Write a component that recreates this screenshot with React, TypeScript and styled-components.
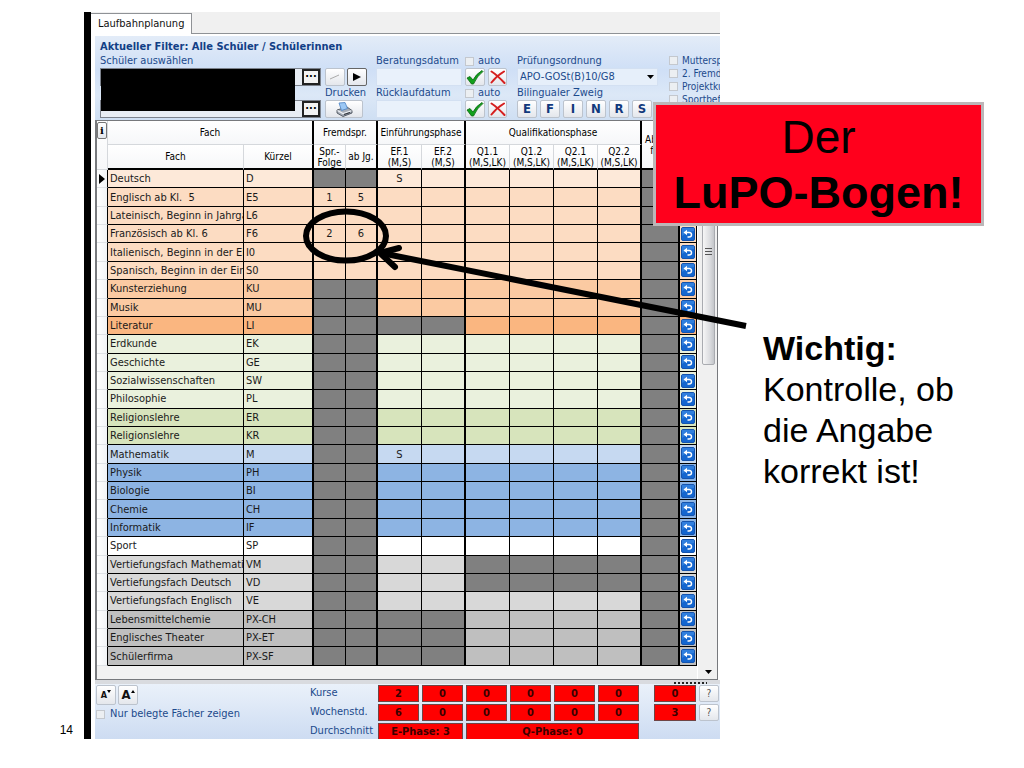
import React from "react";
import styled, { createGlobalStyle, css } from "styled-components";

const GlobalStyle = createGlobalStyle`
  * { box-sizing: border-box; }
  body {
    margin: 0;
    background: #fff;
    color: #000;
    font-family: "Liberation Sans", Arial, sans-serif;
  }
  button, input, select {
    font: inherit;
    margin: 0;
    padding: 0;
  }
`;

const UI_FONT = `"DejaVu Sans Condensed", "DejaVu Sans", Tahoma, sans-serif`;
const LABEL_BLUE = "#1c4a8c";

/* ---------- slide ---------- */

const Slide = styled.main`
  min-height: 100vh;
  display: grid;
  grid-template-columns: 84px minmax(0, 636px) minmax(0, 1fr);
  align-items: start;
  align-content: start;
  padding-top: 12px;
  overflow: hidden;
`;

const PageNumber = styled.div`
  align-self: end;
  justify-self: end;
  padding-right: 11px;
  font-size: 12px;
  line-height: 18px;
`;

const Shot = styled.section`
  position: relative;
  border-left: 7px solid #000;
  font-family: ${UI_FONT};
  font-size: 11px;
  line-height: 14px;
`;

const Note = styled.aside`
  padding: 316px 0 0 43px;
  font-size: 34px;
  line-height: 41px;
  p { margin: 0; max-width: 210px; }
`;

const Banner = styled.h1`
  position: absolute;
  left: 562px;
  top: 90px;
  width: 331px;
  height: 124px;
  margin: 0;
  padding: 5px 0;
  border: 3px solid #bcb6b8;
  background: #ff001c;
  color: #000;
  text-align: center;
  font: 400 46px/55px "Liberation Sans", Arial, sans-serif;
  white-space: nowrap;
  strong { display: block; font-size: 45px; }
`;

const Marks = styled.svg`
  position: absolute;
  left: 0;
  top: 0;
  overflow: visible;
  pointer-events: none;
`;

/* ---------- tab strip ---------- */

const TabStrip = styled.nav`
  display: flex;
  align-items: flex-end;
  height: 22px;
  background: #f0f0f0;
  border-bottom: 1px solid #8f9296;
`;

const Tab = styled.button`
  height: 21px;
  padding: 0 7px;
  margin-bottom: -1px;
  border: 1px solid #8f9296;
  border-width: 1px 1px 0 0;
  background: #fff;
  color: #111;
`;

const Body = styled.div`
  padding: 2px 0 0 4px;
  background: #fff;
`;

/* ---------- toolbar ---------- */

const Toolbar = styled.header`
  height: 84px;
  padding: 3px 0 0 5px;
  overflow: hidden;
  background: linear-gradient(#e3ecf8, #cfdff6 40%, #dce8f7 70%, #cfdff3);
  color: ${LABEL_BLUE};
`;

const FilterTitle = styled.h2`
  margin: 0;
  font-size: 11px;
  line-height: 15px;
  color: #123f86;
`;

const Controls = styled.div`
  display: flex;
  white-space: nowrap;
`;

const Group = styled.div<{ $w: number; $gap: number }>`
  flex: 0 0 ${(p) => p.$w}px;
  margin-right: ${(p) => p.$gap}px;
  display: grid;
  grid-template-rows: 14px 18px 14px 18px;
  position: relative;
`;

const Row = styled.div<{ $gap?: number }>`
  display: flex;
  align-items: center;
  gap: ${(p) => p.$gap ?? 0}px;
`;

const Caption = styled.label`
  display: flex;
  align-items: center;
  gap: 4px;
  font-size: 11px;
  line-height: 14px;
`;

const PickerRow = styled.div`
  display: flex;
  border: 1px solid #7c828c;
  background: #e8edf4;
`;

const PickerInput = styled.input`
  flex: 1;
  min-width: 0;
  border: 0;
  background: transparent;
`;

const DotsButton = styled.button`
  width: 18px;
  border: 2px solid #222;
  background: #f3f3f3;
  color: #000;
  font-weight: 700;
  line-height: 8px;
`;

const Redaction = styled.div`
  position: absolute;
  left: 1px;
  top: 15px;
  width: 194px;
  height: 42px;
  background: #000;
`;

const raised = css`
  border: 1px solid #bcc3cd;
  border-radius: 2px;
  background: linear-gradient(#ffffff, #e4e7ec);
  display: flex;
  align-items: center;
  justify-content: center;
`;

const ToolButton = styled.button<{ $w: number; $dark?: boolean }>`
  ${raised}
  width: ${(p) => p.$w}px;
  height: 18px;
  ${(p) => p.$dark && "border-color: #666;"}
`;

const LetterButton = styled(ToolButton)`
  font-size: 13px;
  font-weight: 700;
  color: #12397c;
`;

const DateInput = styled.input`
  border: 1px solid #d3e0f2;
  background: #e9f1fb;
  min-width: 0;
`;

const SelectWrap = styled.div`
  position: relative;
  display: flex;
  svg { position: absolute; right: 4px; top: 7px; pointer-events: none; }
`;

const Select = styled.select`
  appearance: none;
  width: 100%;
  padding-left: 2px;
  border: 1px solid #d3e0f2;
  background: #e6effa;
  color: ${LABEL_BLUE};
`;

const Check = styled.input.attrs({ type: "checkbox" })`
  appearance: none;
  width: 9px;
  height: 9px;
  flex: none;
  border: 1px solid #c4c8ce;
  background: #eceff2;
`;

const Options = styled.div`
  display: flex;
  flex-direction: column;
`;

const Option = styled.label`
  display: flex;
  align-items: center;
  gap: 4px;
  height: 13px;
  font-size: 10px;
`;

/* ---------- table ---------- */

const Frame = styled.div`
  display: flex;
  height: 560px;
  margin-right: 2px;
  border: 1px solid #77797d;
  border-left-width: 2px;
  background: #f2f2f2;
`;

const Grid = styled.table`
  flex: 1;
  width: 100%;
  min-width: 0;
  height: 545px;
  table-layout: fixed;
  border-collapse: separate;
  border-spacing: 0;
`;

const Th = styled.th<{ $thick?: boolean; $last?: boolean; $none?: boolean }>`
  padding: 0;
  font-weight: 400;
  font-size: 10px;
  line-height: 11px;
  white-space: nowrap;
  background: linear-gradient(#fff, #f6f7f9);
  border-bottom: ${(p) => (p.$last ? "2px solid #000" : "1px solid #d5d8dc")};
  border-right: ${(p) => (p.$none ? "0" : p.$thick ? "2px solid #000" : "1px solid #d5d8dc")};
`;

const InfoHead = styled(Th)`
  vertical-align: top;
  padding-top: 1px;
`;

const HeadRow = styled.tr<{ $h: number }>`
  height: ${(p) => p.$h}px;
`;

const Line = styled.span`
  display: block;
`;

const Lead = styled.td`
  padding: 0;
  border-right: 1px solid #000;
  border-bottom: 1px solid #dfe2e6;
  background: linear-gradient(90deg, #fff, #f1f3f6);
  svg { display: block; }
`;

const Cell = styled.td<{ $bg: string; $thick?: boolean; $text?: boolean }>`
  padding: 0 0 0 ${(p) => (p.$text ? 2 : 0)}px;
  text-align: ${(p) => (p.$text ? "left" : "center")};
  line-height: 13px;
  color: #1a1a1a;
  white-space: pre;
  overflow: hidden;
  background: ${(p) => p.$bg};
  border-bottom: 1px solid #000;
  border-right: ${(p) => (p.$thick ? 2 : 1)}px solid #000;
`;

const UndoButton = styled.button`
  display: block;
  width: 14px;
  height: 14px;
  margin: 0 auto;
  border: 0;
  background: none;
  svg { display: block; }
`;

const InfoButton = styled.button`
  ${raised}
  width: 10px;
  height: 17px;
  border-color: #777;
  font: 700 10px/10px "DejaVu Serif", serif;
`;

const ScrollBar = styled.div`
  flex: 0 0 19px;
  display: flex;
  flex-direction: column;
  align-items: center;
  padding: 16px 2px 5px 4px;
  background: #f0f0f0;
  border-left: 1px solid #fff;
`;

const Thumb = styled.div`
  width: 13px;
  height: 228px;
  margin-bottom: auto;
  display: flex;
  justify-content: center;
  align-items: center;
  border: 1px solid #a9abb0;
  border-radius: 2px;
  background: linear-gradient(90deg, #f6f6f6, #dcdde0 60%, #c4c6ca);
`;

/* ---------- footer ---------- */

const Splitter = styled.div`
  height: 4px;
  padding-right: 13px;
  display: flex;
  justify-content: flex-end;
  background: #d9dbdf;
`;

const Footer = styled.footer`
  display: flex;
  justify-content: space-between;
  align-items: flex-start;
  height: 55px;
  overflow: hidden;
  background: linear-gradient(#eaf1fa, #cddcf2);
  color: ${LABEL_BLUE};
`;

const FooterLeft = styled.div`
  padding: 1px 0 0 1px;
`;

const FontButton = styled.button<{ $big?: boolean }>`
  ${raised}
  width: 20px;
  height: 20px;
  color: #111;
  font-weight: 700;
  font-size: ${(p) => (p.$big ? 13 : 9)}px;
  svg { align-self: flex-start; margin-top: 4px; }
`;

const OnlyTaken = styled.label`
  display: flex;
  align-items: center;
  gap: 5px;
  margin-top: 2px;
`;

const Totals = styled.table`
  width: 411px;
  table-layout: fixed;
  border-collapse: separate;
  border-spacing: 0;
  th { padding: 0 0 2px 1px; font-weight: 400; text-align: left; line-height: 14px; }
  td { padding: 1px 3px 1px 0; height: 19px; }
`;

const Total = styled.div`
  height: 17px;
  border: 1px solid #6f4444;
  background: #ff0000;
  color: #3a0000;
  font-weight: 700;
  line-height: 15px;
  text-align: center;
`;

const HelpButton = styled.button`
  ${raised}
  width: 20px;
  height: 17px;
  font-size: 10px;
  color: #555;
`;

/* ---------- drawings ---------- */

const Tick = () => (
  <svg width="18" height="15" viewBox="0 0 18 15">
    <path d="M1 8 L4 6.5 L7 10 Q10 4 16 0.5 L17 1.5 Q11 6 7.5 14 L5.5 14 Z" fill="#12a01c" stroke="#08660f" strokeWidth="0.8" />
  </svg>
);

const Cross = () => (
  <svg width="16" height="14" viewBox="0 0 16 14">
    <path d="M1.5 1.5 Q7 5 14.5 13 M14 1.5 Q7 5.5 1.5 12.5" fill="none" stroke="#d51f1f" strokeWidth="2" strokeLinecap="round" />
  </svg>
);

const Printer = () => (
  <svg width="17" height="15" viewBox="0 0 17 15">
    <path d="M1 8 L11 5 L16 8.5 L16 11 L7 14.5 L1 11 Z" fill="#a6adb8" stroke="#4c525c" strokeWidth="0.9" />
    <path d="M3 1 L9 0.5 L11.5 6.5 L5.5 8.5 Z" fill="#9cc8f5" stroke="#4c83c4" strokeWidth="0.8" />
    <path d="M1.5 8.5 L7 11.5 L15.5 8.7" fill="none" stroke="#eef1f5" strokeWidth="1.2" />
    <path d="M8 12.5 L14 10.5" stroke="#2f343c" strokeWidth="1.2" />
  </svg>
);

const Undo = () => (
  <svg width="14" height="14" viewBox="0 0 14 14">
    <rect x="0.5" y="0.5" width="13" height="13" rx="1.5" fill="#1466cf" stroke="#1553ad" />
    <path d="M1 1 H13 V4 Q6 5 1 9 Z" fill="#4b98ee" opacity="0.5" />
    <path d="M5 5.5 H8 Q10.5 5.5 10.5 7.7 Q10.5 10 8 10 H6.5" fill="none" stroke="#fff" strokeWidth="1.5" />
    <path d="M2.5 5.5 L6 2.7 V8.3 Z" fill="#fff" />
  </svg>
);

const Triangle = ({ d, w = 8, h = 8 }: { d: string; w?: number; h?: number }) => (
  <svg width={w} height={h} viewBox={`0 0 ${w} ${h}`}>
    <path d={d} fill="#000" />
  </svg>
);

/* ---------- data ---------- */

const GREY = "#808080";
const C = {
  german: "#fde9d9",
  lang: "#fcdcc2",
  art: "#fbcaa2",
  lit: "#fab680",
  soc: "#eaf1dd",
  rel: "#d7e4bc",
  math: "#c6d9f1",
  sci: "#8db4e3",
  sport: "#ffffff",
  deep: "#d8d8d8",
  project: "#bfbfbf",
};

type Subject = {
  name: string;
  code: string;
  bg: string;
  lang?: [string, string];
  ef?: string;
  offEf?: boolean;
  offQ?: boolean;
};

const subjects: Subject[] = [
  { name: "Deutsch", code: "D", bg: C.german, ef: "S" },
  { name: "Englisch ab Kl.  5", code: "E5", bg: C.lang, lang: ["1", "5"] },
  { name: "Lateinisch, Beginn in Jahrgang 6", code: "L6", bg: C.lang, lang: ["", ""] },
  { name: "Französisch ab Kl. 6", code: "F6", bg: C.lang, lang: ["2", "6"] },
  { name: "Italienisch, Beginn in der Einführungsphase", code: "I0", bg: C.lang, lang: ["", ""] },
  { name: "Spanisch, Beginn in der Einführungsphase", code: "S0", bg: C.lang, lang: ["", ""] },
  { name: "Kunsterziehung", code: "KU", bg: C.art },
  { name: "Musik", code: "MU", bg: C.art },
  { name: "Literatur", code: "LI", bg: C.lit, offEf: true },
  { name: "Erdkunde", code: "EK", bg: C.soc },
  { name: "Geschichte", code: "GE", bg: C.soc },
  { name: "Sozialwissenschaften", code: "SW", bg: C.soc },
  { name: "Philosophie", code: "PL", bg: C.soc },
  { name: "Religionslehre", code: "ER", bg: C.rel },
  { name: "Religionslehre", code: "KR", bg: C.rel },
  { name: "Mathematik", code: "M", bg: C.math, ef: "S" },
  { name: "Physik", code: "PH", bg: C.sci },
  { name: "Biologie", code: "BI", bg: C.sci },
  { name: "Chemie", code: "CH", bg: C.sci },
  { name: "Informatik", code: "IF", bg: C.sci },
  { name: "Sport", code: "SP", bg: C.sport },
  { name: "Vertiefungsfach Mathematik", code: "VM", bg: C.deep, offQ: true },
  { name: "Vertiefungsfach Deutsch", code: "VD", bg: C.deep, offQ: true },
  { name: "Vertiefungsfach Englisch", code: "VE", bg: C.deep },
  { name: "Lebensmittelchemie", code: "PX-CH", bg: C.project, offEf: true },
  { name: "Englisches Theater", code: "PX-ET", bg: C.project, offEf: true },
  { name: "Schülerfirma", code: "PX-SF", bg: C.project, offEf: true },
];

const SubjectRow = ({ s, active }: { s: Subject; active: boolean }) => {
  const langBg = s.lang ? s.bg : GREY;
  const efBg = s.offEf ? GREY : s.bg;
  const qBg = s.offQ ? GREY : s.bg;
  return (
    <tr>
      <Lead>{active && <Triangle w={9} h={10} d="M2 0 L8 5 L2 10 Z" />}</Lead>
      <Cell $bg={s.bg} $text>{s.name}</Cell>
      <Cell $bg={s.bg} $text $thick>{s.code}</Cell>
      <Cell $bg={langBg}>{s.lang?.[0]}</Cell>
      <Cell $bg={langBg} $thick>{s.lang?.[1]}</Cell>
      <Cell $bg={efBg}>{s.ef}</Cell>
      <Cell $bg={efBg} $thick />
      <Cell $bg={qBg} />
      <Cell $bg={qBg} />
      <Cell $bg={qBg} />
      <Cell $bg={qBg} $thick />
      <Cell $bg={GREY} $thick />
      <Cell $bg={s.bg}>
        <UndoButton aria-label={`${s.name} zurücksetzen`}><Undo /></UndoButton>
      </Cell>
    </tr>
  );
};

const columnWidths = [11, 0, 70, 32, 32, 44, 44, 44, 44, 44, 44, 38, 17];

const DateGroup = ({ first, second }: { first: string; second: string }) => (
  <>
    <Group $w={86} $gap={3}>
      <Caption htmlFor="beratung">{first}</Caption>
      <DateInput id="beratung" />
      <Caption htmlFor="ruecklauf">{second}</Caption>
      <DateInput id="ruecklauf" />
    </Group>
    <Group $w={41} $gap={10}>
      {[first, second].map((name) => (
        <React.Fragment key={name}>
          <Caption><Check />auto</Caption>
          <Row $gap={3}>
            <ToolButton $w={20} aria-label={`${name} setzen`}><Tick /></ToolButton>
            <ToolButton $w={19} aria-label={`${name} löschen`}><Cross /></ToolButton>
          </Row>
        </React.Fragment>
      ))}
    </Group>
  </>
);

export default function App() {
  return (
    <>
      <GlobalStyle />
      <Slide>
        <PageNumber>14</PageNumber>
        <Shot>
          <TabStrip>
            <Tab>Laufbahnplanung</Tab>
          </TabStrip>
          <Body>
            <Toolbar>
              <FilterTitle>Aktueller Filter: Alle Schüler / Schülerinnen</FilterTitle>
              <Controls>
                <Group $w={221} $gap={4}>
                  <Caption htmlFor="schueler">Schüler auswählen</Caption>
                  <PickerRow>
                    <PickerInput id="schueler" />
                    <DotsButton aria-label="Schüler suchen">···</DotsButton>
                  </PickerRow>
                  <span />
                  <PickerRow>
                    <PickerInput aria-label="Auswahl" />
                    <DotsButton aria-label="Auswahl suchen">···</DotsButton>
                  </PickerRow>
                  <Redaction />
                </Group>
                <Group $w={43} $gap={8}>
                  <span />
                  <Row $gap={2}>
                    <ToolButton $w={20} aria-label="Zurück">
                      <svg width="10" height="6" viewBox="0 0 10 6"><path d="M0 5 L9 1" stroke="#aaa" /></svg>
                    </ToolButton>
                    <ToolButton $w={20} $dark aria-label="Weiter"><Triangle d="M0 0 L8 4 L0 8 Z" /></ToolButton>
                  </Row>
                  <Caption as="span">Drucken</Caption>
                  <ToolButton $w={38} aria-label="Drucken"><Printer /></ToolButton>
                </Group>
                <DateGroup first="Beratungsdatum" second="Rücklaufdatum" />
                <Group $w={141} $gap={11}>
                  <Caption htmlFor="ordnung">Prüfungsordnung</Caption>
                  <SelectWrap>
                    <Select id="ordnung">
                      <option>APO-GOSt(B)10/G8</option>
                    </Select>
                    <Triangle w={7} h={4} d="M0 0 H7 L3.5 4 Z" />
                  </SelectWrap>
                  <Caption as="span">Bilingualer Zweig</Caption>
                  <Row $gap={3}>
                    {["E", "F", "I", "N", "R", "S"].map((l) => (
                      <LetterButton key={l} $w={20}>{l}</LetterButton>
                    ))}
                  </Row>
                </Group>
                <Options>
                  {["Muttersprachler", "2. Fremdsprache", "Projektkurs", "Sportbefreiung"].map((o) => (
                    <Option key={o}><Check />{o}</Option>
                  ))}
                </Options>
              </Controls>
            </Toolbar>

            <Frame>
              <Grid>
                <colgroup>
                  {columnWidths.map((w, i) => (
                    <col key={i} width={w || undefined} />
                  ))}
                </colgroup>
                <thead>
                  <HeadRow $h={24}>
                    <InfoHead rowSpan={2}>
                      <InfoButton aria-label="Info">i</InfoButton>
                    </InfoHead>
                    <Th colSpan={2} $thick>Fach</Th>
                    <Th colSpan={2} $thick>Fremdspr.</Th>
                    <Th colSpan={2} $thick>Einführungsphase</Th>
                    <Th colSpan={4} $thick>Qualifikationsphase</Th>
                    <Th rowSpan={2} $thick $last><Line>Abitur-</Line><Line>fach</Line></Th>
                    <Th rowSpan={2} $last $none />
                  </HeadRow>
                  <HeadRow $h={25}>
                    <Th $last>Fach</Th>
                    <Th $last $thick>Kürzel</Th>
                    <Th $last><Line>Spr.-</Line><Line>Folge</Line></Th>
                    <Th $last $thick>ab Jg.</Th>
                    <Th $last><Line>EF.1</Line><Line>(M,S)</Line></Th>
                    <Th $last $thick><Line>EF.2</Line><Line>(M,S)</Line></Th>
                    {["Q1.1", "Q1.2", "Q2.1", "Q2.2"].map((q, i) => (
                      <Th key={q} $last $thick={i === 3}><Line>{q}</Line><Line>(M,S,LK)</Line></Th>
                    ))}
                  </HeadRow>
                </thead>
                <tbody>
                  {subjects.map((s, i) => (
                    <SubjectRow key={s.code} s={s} active={i === 0} />
                  ))}
                </tbody>
              </Grid>
              <ScrollBar>
                <Thumb>
                  <svg width="7" height="8" viewBox="0 0 7 8">
                    <path d="M0 1.5 H7 M0 4.5 H7 M0 7.5 H7" stroke="#555" />
                  </svg>
                </Thumb>
                <Triangle w={7} h={4} d="M0 0 H7 L3.5 4 Z" />
              </ScrollBar>
            </Frame>

            <Splitter>
              <svg width="34" height="4" viewBox="0 0 34 4">
                <path d="M1 3 H34" stroke="#222" strokeWidth="2" strokeDasharray="2 2" />
              </svg>
            </Splitter>

            <Footer>
              <FooterLeft>
                <Row $gap={2}>
                  <FontButton aria-label="Schrift kleiner">A<Triangle w={4} h={3} d="M0 0 H4 L2 3 Z" /></FontButton>
                  <FontButton $big aria-label="Schrift größer">A<Triangle w={4} h={3} d="M0 3 H4 L2 0 Z" /></FontButton>
                </Row>
                <OnlyTaken><Check />Nur belegte Fächer zeigen</OnlyTaken>
              </FooterLeft>
              <Totals>
                <colgroup>
                  {[69, 44, 44, 44, 44, 44, 44, 12, 45, 21].map((w, i) => (
                    <col key={i} width={w} />
                  ))}
                </colgroup>
                <tbody>
                  {[
                    { label: "Kurse", values: [2, 0, 0, 0, 0, 0], sum: 0 },
                    { label: "Wochenstd.", values: [6, 0, 0, 0, 0, 0], sum: 3 },
                  ].map((r) => (
                    <tr key={r.label}>
                      <th scope="row">{r.label}</th>
                      {r.values.map((v, i) => (
                        <td key={i}><Total>{v}</Total></td>
                      ))}
                      <td />
                      <td><Total>{r.sum}</Total></td>
                      <td><HelpButton aria-label={`Hilfe ${r.label}`}>?</HelpButton></td>
                    </tr>
                  ))}
                  <tr>
                    <th scope="row">Durchschnitt</th>
                    <td colSpan={2}><Total>E-Phase: 3</Total></td>
                    <td colSpan={4}><Total>Q-Phase: 0</Total></td>
                    <td colSpan={3} />
                  </tr>
                </tbody>
              </Totals>
            </Footer>
          </Body>

          <Banner>Der <strong>LuPO-Bogen!</strong></Banner>
          <Marks width="660" height="330" viewBox="91 12 660 330">
            <g fill="none" stroke="#000" strokeWidth="6">
              <ellipse cx="346" cy="236" rx="40" ry="24.5" />
              <path d="M746 326 L381 253" />
              <path d="M399 248 L380 253 L395 267" strokeLinecap="round" strokeLinejoin="round" />
            </g>
          </Marks>
        </Shot>
        <Note>
          <p><strong>Wichtig:</strong> Kontrolle, ob die Angabe korrekt ist!</p>
        </Note>
      </Slide>
    </>
  );
}
